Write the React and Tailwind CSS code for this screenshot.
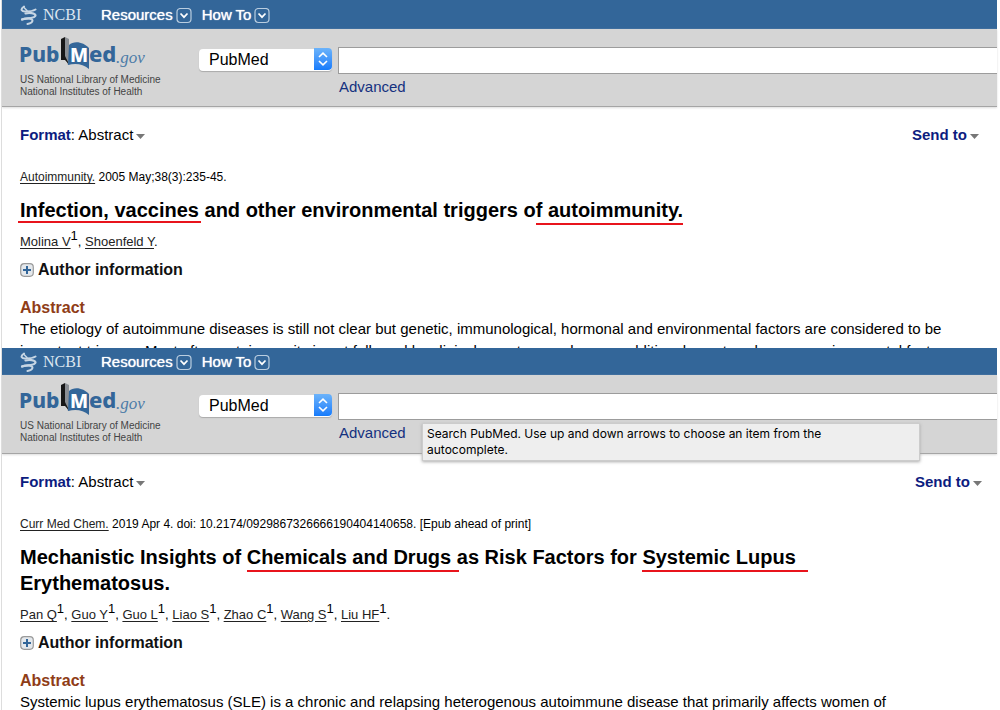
const papers = [
  {
    id: 'molina',
    journal: 'Autoimmunity.',
    citation: '2005 May;38(3):235-45.',
    title: [
      { text: 'Infection, vaccines', mark: '-left-0.5 -right-0.5 -bottom-0.5' },
      { text: ' and other environmental triggers of ' },
      { text: 'autoimmunity.', mark: '-left-3 right-0 -bottom-1' },
    ],
    authors: ['Molina V', 'Shoenfeld Y'],
    affiliated: 1,
    abstract:
      'The etiology of autoimmune diseases is still not clear but genetic, immunological, hormonal and environmental factors are considered to be important triggers. Most often autoimmunity is not followed by clinical symptoms unless an additional event such as an environmental factor',
  },
  {
    id: 'pan',
    journal: 'Curr Med Chem.',
    citation: '2019 Apr 4. doi: 10.2174/0929867326666190404140658. [Epub ahead of print]',
    title: [
      { text: 'Mechanistic Insights of ' },
      { text: 'Chemicals and Drugs', mark: 'left-0 -right-2 -bottom-1' },
      { text: ' as Risk Factors for ' },
      { text: 'Systemic Lupus', mark: 'left-0 -right-3 -bottom-1' },
      { text: ' Erythematosus.' },
    ],
    authors: ['Pan Q', 'Guo Y', 'Guo L', 'Liao S', 'Zhao C', 'Wang S', 'Liu HF'],
    affiliated: 7,
    abstract:
      'Systemic lupus erythematosus (SLE) is a chronic and relapsing heterogenous autoimmune disease that primarily affects women of',
    tooltip: true,
  },
];

function NcbiMark() {
  return (
    <svg className="h-5 w-[17px]" viewBox="0 0 17 20" fill="none" stroke="#c7d6e4" strokeLinecap="round" aria-hidden="true">
      <path d="M4 1.5C-0.5 4.500 2 7 6 6.500C10 6.500 13 6 15.500 4.500" strokeWidth="2" />
      <path d="M5.500 8.500C9 7.500 15 8 15.500 10.500C15.500 13.500 7 13 2 14.500" strokeWidth="2.2" />
      <path d="M2 14.500C6 12.500 12.500 13.500 12.500 15.500C12.500 17.500 10 18.500 7.500 19" strokeWidth="2" />
      <path d="M4 2.500L7 5.500" strokeWidth="1.5" />
    </svg>
  );
}

function NavMenu({ label }) {
  return (
    <button type="button" className="flex items-center gap-[3px] text-white">
      <span className="[text-shadow:0_0_1px_#fff]">{label}</span>
      <svg className="h-4 w-4" viewBox="0 0 16 16" fill="none" aria-hidden="true">
        <rect x="1" y="0.5" width="14" height="14" rx="3.5" stroke="#b9cde0" strokeWidth="1.2" />
        <path d="M4.5 5.5L8 9.2L11.5 5.5" stroke="#fff" strokeWidth="1.7" />
      </svg>
    </button>
  );
}

function PubMedLogo() {
  return (
    <svg className="h-8 w-[126px]" viewBox="0 0 126 32" role="img" aria-label="PubMed.gov">
      <text x="-1" y="25" fontFamily="'Noto Sans', sans-serif" fontWeight="800" fontSize="21" fill="#336699">
        Pub
      </text>
      <path d="M45 0L49 2V18L52 22L48 28L45 20Z" fill="#8b8f94" />
      <path d="M41 2L45 0V19L49.500 28L45 23L41 23Z" fill="#171717" />
      <path d="M49 8C54 3 64 5 69 11V32C63 27 56 26 48 28Z" fill="#336699" />
      <text x="50" y="25" fontFamily="'Noto Sans', sans-serif" fontWeight="800" fontSize="19" fill="#fff">
        M
      </text>
      <text x="69" y="25" fontFamily="'Noto Sans', sans-serif" fontWeight="800" fontSize="22" fill="#336699">
        ed
      </text>
      <text x="96" y="26" fontFamily="'Liberation Serif', serif" fontStyle="italic" fontSize="17" fill="#4d7ca8">
        .gov
      </text>
    </svg>
  );
}

function Caret() {
  return (
    <svg className="mt-0.5 h-[5px] w-[9px]" viewBox="0 0 9 5" aria-hidden="true">
      <path d="M0 0H9L4.5 5Z" fill="#777" />
    </svg>
  );
}

function SearchHeader({ id, tooltip }) {
  return (
    <header
      className={`flex border-b border-[#a5a5a5] bg-[#d5d5d5] pl-[18px] shadow-[0_1px_2px_#ddd] ${tooltip ? 'h-[79px]' : 'h-[78px]'}`}
    >
      <div className="w-[179px] shrink-0 pt-2">
        <a href="#pubmed" className="block">
          <PubMedLogo />
        </a>
        <p className="mt-[5px] text-[10px] leading-3 text-[#444]">
          US National Library of Medicine
          <br />
          National Institutes of Health
        </p>
      </div>
      <div className="relative mt-[19px] h-[22px] w-[133px] shrink-0">
        <select
          aria-label="Database"
          className="h-full w-full appearance-none rounded bg-white pl-2.5 text-base leading-5 text-black shadow-[0_1px_1px_#aaa]"
        >
          <option>PubMed</option>
        </select>
        <span className="pointer-events-none absolute inset-y-0 right-0 flex w-[18px] items-center justify-center rounded-r bg-linear-to-b from-[#6bb3fa] to-[#147bfb]">
          <svg className="h-4 w-3" viewBox="0 0 12 16" fill="none" stroke="#fff" strokeWidth="1.6" aria-hidden="true">
            <path d="M2 6L6 2.2L10 6M2 10L6 13.8L10 10" />
          </svg>
        </span>
      </div>
      <div className="relative ml-1.5 min-w-0 flex-1 pt-[18px]">
        <input
          type="text"
          id={`term-${id}`}
          aria-label="Search term"
          className="block h-[27px] w-full border-y border-l border-[#9c9c9c] bg-white px-2 text-[15px]"
        />
        <a href="#advanced" className="mt-1 ml-px inline-block text-[15px] leading-[18px] text-[#14317f]">
          Advanced
        </a>
        {tooltip && (
          <div
            role="tooltip"
            className="absolute top-12 left-[84px] z-10 w-[498px] border border-[#ccc] bg-[#eee] px-1 py-0.5 font-[Inter,sans-serif] text-xs leading-4 text-black shadow-[0_1px_3px_#aaa]"
          >
            Search PubMed. Use up and down arrows to choose an item from the
            <br />
            autocomplete.
          </div>
        )}
      </div>
    </header>
  );
}

function Paper({ paper }) {
  return (
    <section className="border-l border-[#ddd]">
      <nav className={`flex items-center bg-[#336699] pl-[18px] text-[15px] ${paper.tooltip ? 'h-[27px]' : 'h-[29px]'}`}>
        <a href="#ncbi" className="flex w-[81px] items-center gap-1.5 font-['Liberation_Serif',serif] text-base text-[#dbe5ef]">
          <NcbiMark />
          NCBI
        </a>
        <div className="flex gap-2.5 pt-0.5">
          <NavMenu label="Resources" />
          <NavMenu label="How To" />
        </div>
      </nav>
      <SearchHeader id={paper.id} tooltip={paper.tooltip} />

      <article className="pl-[18px]">
        <div className={`flex justify-between pt-[18px] text-[15px] leading-5 ${paper.tooltip ? 'pr-[15px]' : 'pr-[18px]'}`}>
          <button type="button" className="flex items-center gap-[3px]">
            <span>
              <b className="text-[#0c1c80]">Format</b>: Abstract
            </span>
            <Caret />
          </button>
          <button type="button" className="flex items-center gap-[3px] font-bold text-[#0c1c80]">
            Send to
            <Caret />
          </button>
        </div>

        <p className="mt-6 text-xs leading-4">
          <a href="#journal" className="text-[#222] underline underline-offset-2">
            {paper.journal}
          </a>{' '}
          {paper.citation}
        </p>
        <h1 className="mt-3 pr-12 text-xl leading-[26px] font-bold">
          {paper.title.map(({ text, mark }) =>
            mark ? (
              <span key={text} className="relative">
                {text}
                <span className={`absolute h-0.5 bg-[#e8141c] ${mark}`} />
              </span>
            ) : (
              text
            ),
          )}
        </h1>
        <p className="mt-[9px] text-[13px] leading-5">
          {paper.authors.map((name, i) => (
            <span key={name}>
              {i > 0 && ', '}
              <a href="#author" className="text-[#222] underline underline-offset-2">
                {name}
              </a>
              {i < paper.affiliated && <sup className="-top-1.5 text-[13px] leading-none">1</sup>}
            </span>
          ))}
          .
        </p>
        <button type="button" className="mt-2 flex items-center gap-1 text-base leading-5 font-bold text-[#111]">
          <svg className="h-3.5 w-3.5" viewBox="0 0 14 14" fill="none" aria-hidden="true">
            <rect x="0.7" y="0.7" width="12.6" height="12.6" rx="3.5" fill="#e4e8ec" stroke="#9a9a9a" strokeWidth="1.2" />
            <path d="M7 3V11M3 7H11" stroke="#336699" strokeWidth="2" />
          </svg>
          Author information
        </button>
        <h2 className="mt-[18px] text-base leading-5 font-bold text-[#8f3d17]">Abstract</h2>
        <p className="max-h-[30px] overflow-hidden pr-12 text-[15px] leading-[22px]">{paper.abstract}</p>
      </article>
    </section>
  );
}

export default function App() {
  return (
    <main className="h-screen overflow-hidden bg-white pr-[3px] pl-px font-['Liberation_Sans',Arial,sans-serif] text-black">
      {papers.map((paper) => (
        <Paper key={paper.id} paper={paper} />
      ))}
    </main>
  );
}
